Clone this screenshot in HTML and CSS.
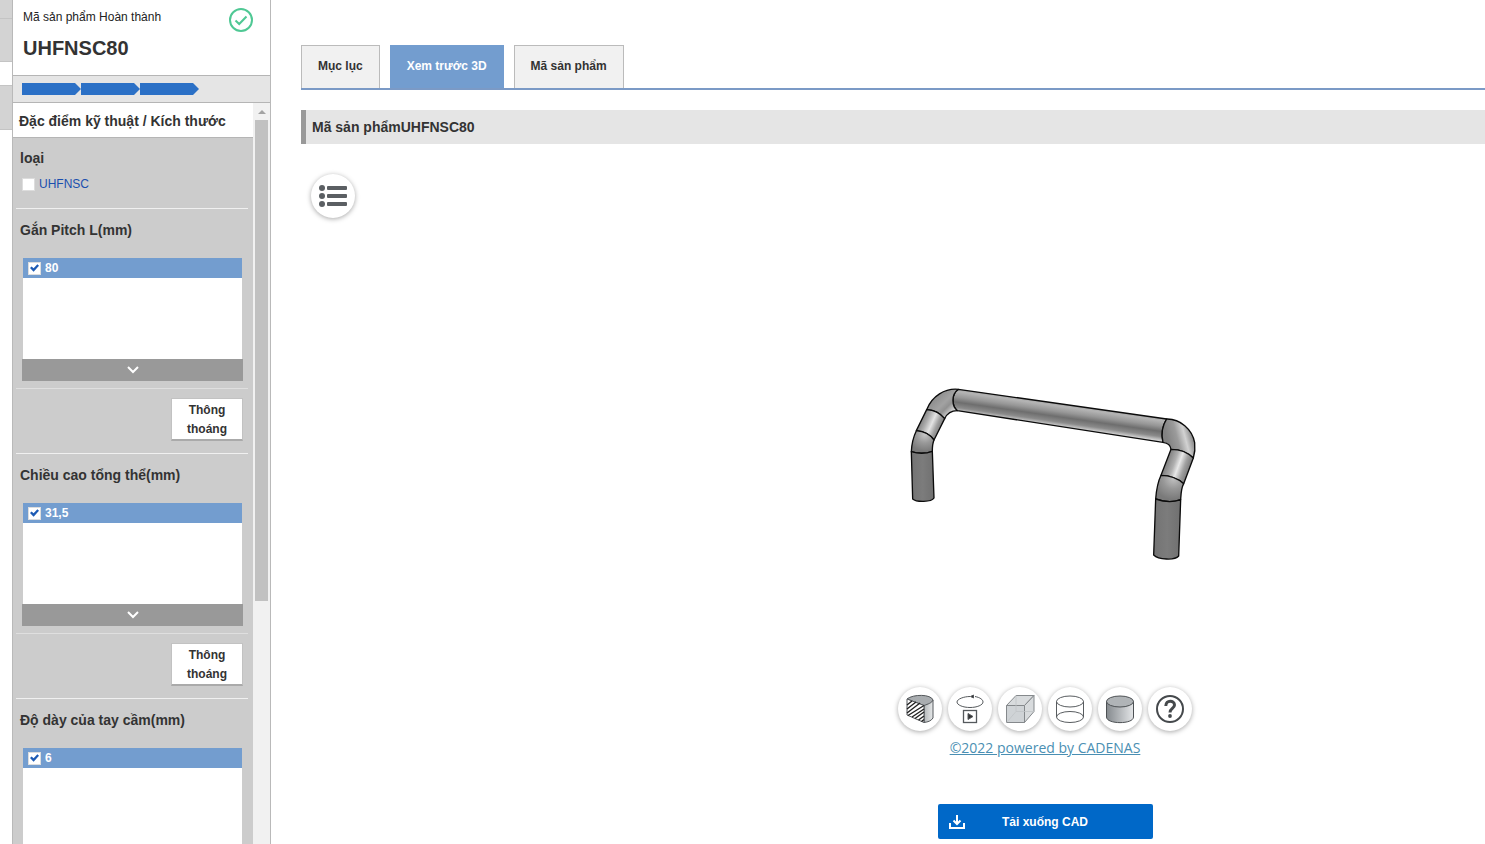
FILE: index.html
```html
<!DOCTYPE html>
<html lang="vi">
<head>
<meta charset="utf-8">
<title>UHFNSC80</title>
<link rel="stylesheet" href="styles.css">
</head>
<body>
<div class="page">
  <div class="gutter">
    <div class="gutter-block gutter-top"></div>
    <div class="gutter-block gutter-mid"></div>
    <div class="gutter-block gutter-low"></div>
  </div>

  <aside class="sidebar">
    <header class="product">
      <div>
        <p class="product-label">Mã sản phẩm Hoàn thành</p>
        <h1 class="product-code">UHFNSC80</h1>
      </div>
      <svg class="product-ok" viewBox="0 0 24 24" fill="none" stroke="#4fc894" stroke-width="2">
        <circle cx="12" cy="12" r="11"/>
        <path d="M6.500 12.500l3.700 3.500 7.300-7.500"/>
      </svg>
    </header>
    <div class="steps">
      <span class="step"></span><span class="step"></span><span class="step"></span>
    </div>
    <div class="scroll-area">
      <div class="filters">
        <h2 class="filters-title">Đặc điểm kỹ thuật / Kích thước</h2>
        <section class="type-group">
          <h3 class="group-title">loại</h3>
          <label class="type-option"><input class="check" type="checkbox">UHFNSC</label>
        </section>
        <section class="group">
          <h3 class="group-title">Gắn Pitch L(mm)</h3>
          <div class="list"><label class="list-item"><input class="check" type="checkbox" checked>80</label></div>
          <button class="expand" type="button" aria-label="Mở rộng"><svg class="chevron" viewBox="0 0 12 8"><path d="M1 1l5 5 5-5"/></svg></button>
          <div class="actions"><button class="clear" type="button">Thông thoáng</button></div>
        </section>
        <section class="group">
          <h3 class="group-title">Chiều cao tổng thể(mm)</h3>
          <div class="list"><label class="list-item"><input class="check" type="checkbox" checked>31,5</label></div>
          <button class="expand" type="button" aria-label="Mở rộng"><svg class="chevron" viewBox="0 0 12 8"><path d="M1 1l5 5 5-5"/></svg></button>
          <div class="actions"><button class="clear" type="button">Thông thoáng</button></div>
        </section>
        <section class="group">
          <h3 class="group-title">Độ dày của tay cầm(mm)</h3>
          <div class="list"><label class="list-item"><input class="check" type="checkbox" checked>6</label></div>
        </section>
      </div>
      <div class="scrollbar">
        <svg class="scroll-up" viewBox="0 0 14 17"><path d="M3 11l4-4 4 4z" fill="#a3a3a3"/></svg>
        <div class="scroll-thumb"></div>
      </div>
    </div>
  </aside>

  <main class="main">
    <nav class="tabs">
      <button class="tab" type="button">Mục lục</button>
      <button class="tab tab-active" type="button">Xem trước 3D</button>
      <button class="tab" type="button">Mã sản phẩm</button>
    </nav>
    <h2 class="part-title">Mã sản phẩmUHFNSC80</h2>
    <div class="viewer">
      <div class="viewer-menu">
        <button class="round" type="button" aria-label="Menu">
          <svg class="menu-icon" viewBox="0 0 28 24" fill="#5b5f63">
            <circle cx="3" cy="4" r="3"/><circle cx="3" cy="12" r="3"/><circle cx="3" cy="20" r="3"/>
            <rect x="8" y="2" width="20" height="4" rx="1"/><rect x="8" y="10" width="20" height="4" rx="1"/><rect x="8" y="18" width="20" height="4" rx="1"/>
          </svg>
        </button>
      </div>
      <div class="stage">
        <svg class="model" viewBox="0 0 930 600" stroke="#0b0b0b" stroke-width="4" stroke-linejoin="round" stroke-linecap="round">
          <defs>
            <linearGradient id="bar" gradientUnits="userSpaceOnUse" x1="510" y1="98" x2="500" y2="168">
              <stop offset="0" stop-color="#a2a2a2"/><stop offset=".15" stop-color="#b4b4b4"/><stop offset=".38" stop-color="#979797"/><stop offset=".6" stop-color="#6e6e6e"/><stop offset=".82" stop-color="#8b8b8b"/><stop offset="1" stop-color="#d2d2d2"/>
            </linearGradient>
            <linearGradient id="leg" x1="0" x2="1" y1="0" y2="0">
              <stop offset="0" stop-color="#737373"/><stop offset=".5" stop-color="#7c7c7c"/><stop offset="1" stop-color="#707070"/>
            </linearGradient>
            <linearGradient id="slantL" gradientUnits="userSpaceOnUse" x1="92" y1="150" x2="150" y2="176">
              <stop offset="0" stop-color="#7e7e7e"/><stop offset=".3" stop-color="#b0b0b0"/><stop offset=".55" stop-color="#e4e4e4"/><stop offset=".8" stop-color="#a0a0a0"/><stop offset="1" stop-color="#808080"/>
            </linearGradient>
            <linearGradient id="slantR" gradientUnits="userSpaceOnUse" x1="830" y1="280" x2="897" y2="304">
              <stop offset="0" stop-color="#858585"/><stop offset=".3" stop-color="#b0b0b0"/><stop offset=".5" stop-color="#e8e8e8"/><stop offset=".75" stop-color="#a0a0a0"/><stop offset="1" stop-color="#777"/>
            </linearGradient>
            <linearGradient id="bendL" gradientUnits="userSpaceOnUse" x1="125" y1="75" x2="180" y2="130">
              <stop offset="0" stop-color="#858585"/><stop offset=".55" stop-color="#a2a2a2"/><stop offset=".75" stop-color="#919191"/><stop offset="1" stop-color="#cfcfcf"/>
            </linearGradient>
            <linearGradient id="bendR" gradientUnits="userSpaceOnUse" x1="830" y1="205" x2="905" y2="185">
              <stop offset="0" stop-color="#828282"/><stop offset=".4" stop-color="#9b9b9b"/><stop offset=".7" stop-color="#d2d2d2"/><stop offset="1" stop-color="#858585"/>
            </linearGradient>
            <radialGradient id="kneeL" gradientUnits="userSpaceOnUse" cx="104" cy="194" r="50">
              <stop offset="0" stop-color="#c6c6c6"/><stop offset=".5" stop-color="#999"/><stop offset="1" stop-color="#7a7a7a"/>
            </radialGradient>
            <radialGradient id="kneeR" gradientUnits="userSpaceOnUse" cx="850" cy="326" r="62">
              <stop offset="0" stop-color="#c0c0c0"/><stop offset=".5" stop-color="#979797"/><stop offset="1" stop-color="#7a7a7a"/>
            </radialGradient>
          </defs>
          <path fill="url(#bar)" d="M205 58L830 147C817 167 814 195 819 217L202 122C185 108 183 74 205 58z"/>
          <path fill="url(#bendL)" d="M205 58C165 54 126 78 110 119C130 120 151 130 164 146C172 129 184 122 202 122C185 108 183 74 205 58z"/>
          <path fill="url(#slantL)" d="M110 119C130 120 151 130 164 146L132 210C121 194 99 184 79 182z"/>
          <path fill="url(#kneeL)" d="M79 182C99 184 121 194 132 210C128 219 127 230 127 244C108 251 84 251 64 245C65 220 69 203 79 182z"/>
          <path fill="url(#leg)" d="M64 245C84 251 108 251 127 244L132 384C124 397 79 397 68 387z"/>
          <path fill="url(#bendR)" d="M830 147C870 146 907 178 914 218C916 236 914 251 910 264C893 247 869 238 843 238C842 226 834 219 819 217C814 195 817 167 830 147z"/>
          <path fill="url(#slantR)" d="M843 238C869 238 893 247 910 264L881 341C864 326 839 316 813 316z"/>
          <path fill="url(#kneeR)" d="M813 316C839 316 864 326 881 341C873 356 873 372 872 389C850 397 820 395 797 387C799 361 803 337 813 316z"/>
          <path fill="url(#leg)" d="M797 387C820 395 850 397 872 389L866 558C854 572 805 569 791 555z"/>
        </svg>
        <div class="tools">
          <button class="round" type="button" aria-label="Mặt cắt">
            <svg class="tool-icon" viewBox="0 0 32 32" stroke="#55595c" stroke-width="1" stroke-linejoin="round">
              <defs><linearGradient id="g1" x1="0" x2="1"><stop offset="0" stop-color="#b4b8ba"/><stop offset="1" stop-color="#e7e9ea"/></linearGradient></defs>
              <path d="M20 12.500L29 7V25C27 28 24 29 20 29.500z" fill="url(#g1)"/>
              <path d="M3 6C9 1 27 1 29 7C28 10 24 11 20 12.500z" fill="#a9adb0"/>
              <path d="M3 6L20 12.500V29.500L3 22z" fill="#fff"/>
              <path d="M3 12l5-4M3 16l9-7M3 20l13-10M4 22.500L20 12.500M8 24l12-8M11 25.500l9-6.500M14.500 27l5.500-4M17.500 28.500l2.500-2" fill="none" stroke="#222" stroke-width="1.400"/>
            </svg>
          </button>
          <button class="round" type="button" aria-label="Xoay">
            <svg class="tool-icon" viewBox="0 0 32 32" fill="none" stroke="#55595c">
              <path d="M21 3.500C26 4.500 29 6.500 29 9C29 12 23 14.500 16 14.500S3 12 3 9S10 3.500 16 3.500"/>
              <path d="M16.500 3.500l3-1.500v3z" fill="#333"/><rect x="9.500" y="17.500" width="13" height="12" stroke-width="1.300"/><path d="M14 20.500l5 3-5 3z" fill="#333"/>
            </svg>
          </button>
          <button class="round" type="button" aria-label="Khối">
            <svg class="tool-icon" viewBox="0 0 32 32" fill="#d8dbdd" stroke="#85898c" stroke-linejoin="round">
              <path d="M2.500 12.500h18v17h-18z" fill="#cfd3d6"/><path d="M2.500 12.500L12 2.500h18l-9.500 10z"/><path d="M20.500 12.500L30 2.500v16l-9.500 11z"/><path d="M12 2.500v16h18M12 18.500l-9.500 11" fill="none" stroke="#c0c4c7" stroke-width=".8"/>
            </svg>
          </button>
          <button class="round" type="button" aria-label="Khung dây">
            <svg class="tool-icon" viewBox="0 0 32 32" fill="none" stroke="#595d60">
              <ellipse cx="16" cy="8.500" rx="13.500" ry="5.500"/><ellipse cx="16" cy="24" rx="13.500" ry="5.500"/><path d="M2.500 8.500V24M29.500 8.500V24"/>
            </svg>
          </button>
          <button class="round" type="button" aria-label="Tô bóng">
            <svg class="tool-icon" viewBox="0 0 32 32" stroke="#4d5154">
              <defs><linearGradient id="g2" x1="0" x2="1"><stop offset="0" stop-color="#858a8e"/><stop offset="1" stop-color="#e4e6e8"/></linearGradient></defs>
              <path d="M2.500 8.500V24C2.500 31.500 29.500 31.500 29.500 24V8.500z" fill="url(#g2)"/><ellipse cx="16" cy="8.500" rx="13.500" ry="5.500" fill="#b0b4b7"/>
            </svg>
          </button>
          <button class="round" type="button" aria-label="Trợ giúp">
            <svg class="tool-icon" viewBox="0 0 32 32" fill="none" stroke="#45494c">
              <circle cx="16" cy="16" r="13" stroke-width="2"/><path d="M11.800 13C11.800 6.500 20.500 7 20.500 12C20.500 15.500 16 15.500 16 19.500" stroke-width="3"/><circle cx="16" cy="23" r="1.900" fill="#45494c" stroke="none"/>
            </svg>
          </button>
        </div>
        <a class="credit" href="#">©2022 powered by CADENAS</a>
        <button class="download" type="button">
          <svg class="download-icon" viewBox="0 0 16 16" fill="none" stroke="#fff" stroke-width="2"><path d="M8 1v9M4.500 6.500L8 10l3.500-3.500M1 9v5h14V9"/></svg>
          <span class="download-text">Tải xuống CAD</span>
        </button>
      </div>
    </div>
  </main>
</div>
</body>
</html>
```
FILE: styles.css
```css
* { box-sizing: border-box; }
body {
  margin: 0;
  background: #fff;
  color: #333;
  font: 12px/20px "Liberation Sans", Arial, sans-serif;
}
h1, h2, h3, p { margin: 0; }
button { font: inherit; border: 0; padding: 0; cursor: pointer; }
svg { display: block; flex: none; }
.page { display: flex; height: 100vh; overflow: hidden; }

.gutter { flex: none; width: 12px; }
.gutter-block { background: #d3d3d3; }
.gutter-top { height: 19px; border-bottom: 1px solid #c4c4c4; }
.gutter-mid { height: 43px; border-bottom: 1px solid #c4c4c4; }
.gutter-low { height: 45px; margin-top: 23px; border-top: 1px solid #c4c4c4; border-bottom: 1px solid #c4c4c4; }

.sidebar {
  flex: none;
  display: flex;
  flex-direction: column;
  width: 259px;
  border: solid #b9b9b9;
  border-width: 0 1px;
}
.product {
  display: flex;
  justify-content: space-between;
  height: 75px;
  padding: 7px 17px 0 10px;
}
.product-label { color: #222; }
.product-code { margin-top: 8px; font-size: 20px; line-height: 26px; }
.product-ok { width: 24px; height: 24px; margin-top: 1px; }
.steps {
  display: flex;
  height: 28px;
  padding: 7px 9px;
  background: #e5e5e5;
  border: solid #b5b5b5;
  border-width: 1px 0;
}
.step {
  width: 59px;
  height: 12px;
  background: #2b70c6;
  clip-path: polygon(0 0, 53px 0, 100% 50%, 53px 100%, 0 100%);
}
.scroll-area { flex: 1; display: flex; min-height: 0; }
.filters { flex: 1; overflow: hidden; background: #ccc; }
.filters-title {
  height: 35px;
  padding-left: 6px;
  background: #fff;
  border-bottom: 1px solid #b5b5b5;
  font-size: 14px;
  line-height: 36px;
}
.type-group { height: 71px; margin: 0 5px 0 3px; padding: 10px 4px 0; border-bottom: 1px solid #f0f0f0; }
.group-title { font-size: 14px; line-height: 20px; }
.type-option { display: flex; align-items: center; gap: 4px; margin: 6px 0 0 2px; color: #1a4fae; }
.check {
  appearance: none;
  flex: none;
  display: grid;
  place-items: center;
  width: 13px;
  height: 13px;
  margin: 0;
  background: #fff;
  border: 1px solid #ddd;
}
.check:checked::before {
  content: "";
  width: 9px;
  height: 9px;
  background: #1d5bb5;
  clip-path: polygon(0 50%, 18% 32%, 40% 54%, 82% 8%, 100% 26%, 40% 92%);
}
.group { margin: 0 5px 0 3px; padding-top: 11px; border-bottom: 1px solid #f0f0f0; }
.group:last-child { border-bottom: 0; }
.group .group-title { margin: 0 4px 18px; }
.list { height: 101px; margin: 0 6px 0 7px; background: #fff; }
.list-item {
  display: flex;
  align-items: center;
  gap: 4px;
  height: 20px;
  padding-left: 5px;
  background: #739dcf;
  color: #fff;
  font-weight: bold;
}
.expand {
  display: grid;
  place-items: center;
  width: 221px;
  height: 22px;
  margin-left: 6px;
  background: #999;
}
.chevron { width: 12px; height: 8px; fill: none; stroke: #fff; stroke-width: 2; }
.actions {
  display: flex;
  justify-content: flex-end;
  margin-top: 7px;
  padding: 9px 5px 12px;
  border-top: 1px solid #dfdfdf;
}
.clear {
  width: 72px;
  height: 43px;
  padding-top: 2px;
  background: #fff;
  border: 1px solid #c2c2c2;
  border-bottom: 2px solid #aaa;
  color: #333;
  font-weight: bold;
  line-height: 19px;
}
.scrollbar { flex: none; width: 17px; padding: 0 1px 0 2px; background: #f1f1f1; }
.scroll-up { width: 14px; height: 17px; }
.scroll-thumb { width: 13px; height: 481px; background: #c1c1c1; }

.main { flex: 1; min-width: 0; padding: 45px 0 0 30px; }
.tabs { display: flex; gap: 10px; border-bottom: 2px solid #7b9ac6; }
.tab {
  height: 43px;
  padding: 0 16px 2px;
  background: #f1f1f1;
  border: 1px solid #bbb;
  border-bottom: 0;
  color: #333;
  font-weight: bold;
}
.tab-active { background: #739dcf; border-color: #739dcf; color: #fff; }
.part-title {
  margin-top: 20px;
  padding-left: 6px;
  border-left: 5px solid #999;
  background: #e5e5e5;
  font-size: 14px;
  line-height: 34px;
}
.viewer { display: grid; grid-template-columns: 304px 1fr; }
.viewer-menu { padding: 30px 10px; }
.round {
  display: grid;
  place-items: center;
  width: 44px;
  height: 44px;
  border-radius: 50%;
  background: #fff;
  box-shadow: 0 1px 5px rgba(0, 0, 0, .35);
}
.menu-icon { width: 28px; height: 24px; }
.tool-icon { width: 32px; height: 32px; }
.stage { display: flex; flex-direction: column; align-items: center; padding-top: 226px; }
.model { width: 310px; height: 200px; }
.tools { display: flex; gap: 6px; margin-top: 117px; }
.credit { margin-top: 7px; color: #4a8fb3; font: 14px/20px "Open Sans", sans-serif; }
.download {
  display: flex;
  align-items: center;
  width: 215px;
  height: 35px;
  margin-top: 46px;
  padding: 0 11px;
  border-radius: 2px;
  background: #0068c8;
  color: #fff;
  font-weight: bold;
}
.download-icon { width: 16px; height: 16px; }
.download-text { flex: 1; padding-right: 16px; }
```
